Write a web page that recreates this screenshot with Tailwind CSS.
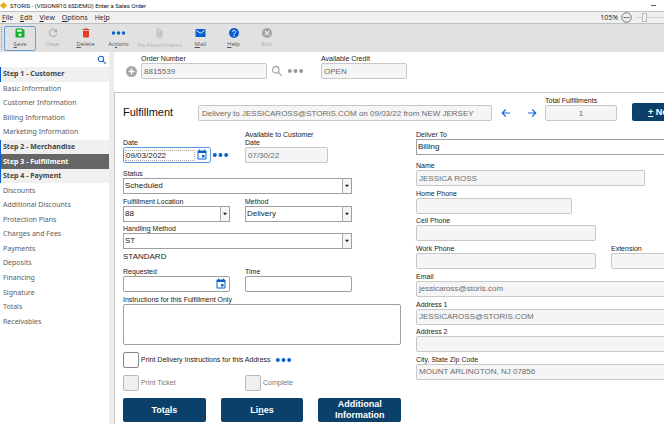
<!DOCTYPE html>
<html lang="en">

<head>
  <meta charset="UTF-8">
  <meta name="viewport" content="width=device-width, initial-scale=1.0">
  <title>Enter a Sales Order</title>
  <script src="https://cdn.jsdelivr.net/npm/@tailwindcss/browser@4"></script>
</head>

<body class="h-screen overflow-hidden flex flex-col bg-white font-['Liberation_Sans',Arial,sans-serif] text-[8px] leading-[8px] text-[#222]">

  <!-- Icons -->
  <svg class="hidden">
    <symbol id="calendar" viewBox="0 0 24 24">
      <path fill="currentColor" d="M17 12h-5v5h5v-5zM16 1v2H8V1H6v2H5a2 2 0 0 0-2 2v14a2 2 0 0 0 2 2h14a2 2 0 0 0 2-2V5a2 2 0 0 0-2-2h-1V1h-2zm3 18H5V8h14v11z" />
    </symbol>
    <symbol id="dots" viewBox="0 0 18 6">
      <g fill="currentColor"><circle cx="3" cy="3" r="2.1" /><circle cx="9" cy="3" r="2.1" /><circle cx="15" cy="3" r="2.1" /></g>
    </symbol>
    <symbol id="search" viewBox="0 0 24 24">
      <g fill="none" stroke="currentColor" stroke-width="2.6"><circle cx="9.5" cy="9.5" r="6.5" /><path d="M14.5 14.5l7 7" /></g>
    </symbol>
    <symbol id="caret" viewBox="0 0 6 4">
      <path fill="currentColor" d="M1 .8h4L3 3.2z" />
    </symbol>
  </svg>

  <!-- Title bar -->
  <header class="h-[11px] shrink-0 flex items-center pr-[8px] font-[Roboto,sans-serif] text-[6px] text-[#111]">
    <svg class="size-[7px] mr-[3px]" viewBox="0 0 14 14"><path fill="#f5a800" d="M7 0l3.300 3.300L7 6.600 3.700 3.300zM3.300 3.700L6.600 7l-3.300 3.300L0 7zM10.700 3.700L14 7l-3.300 3.300L7.400 7zM7 7.400l3.300 3.300L7 14l-3.300-3.300zM5.500 5.500h3v3h-3z" /></svg>
    <h1>STORIS - (VISIONR10.6SDEMO) Enter a Sales Order</h1>
    <button aria-label="Minimize" class="ml-auto w-[5px] h-px bg-[#555]"></button>
  </header>

  <!-- Menu bar -->
  <nav class="h-[13px] shrink-0 flex items-center border-y border-[#c0c0c0] bg-[#f0f0f0] pl-[2px] font-['Open_Sans',sans-serif] text-[7px]">
    <div class="flex gap-[7px]">
      <button><u>F</u>ile</button>
      <button><u>E</u>dit</button>
      <button><u>V</u>iew</button>
      <button><u>O</u>ptions</button>
      <button>He<u>l</u>p</button>
    </div>
    <label for="zoom" class="ml-auto">105%</label>
    <button aria-label="Zoom out" class="ml-[3px]">
      <svg class="size-[11px]" viewBox="0 0 22 22"><g fill="none" stroke="#777" stroke-width="2"><circle cx="11" cy="11" r="9.5" /><path d="M5 11h12" /></g></svg>
    </button>
    <input id="zoom" type="range" value="25" class="ml-[4px] w-[28px] h-[10px] appearance-none bg-transparent [&::-webkit-slider-runnable-track]:h-px [&::-webkit-slider-runnable-track]:bg-[#d0d0d0] [&::-webkit-slider-thumb]:appearance-none [&::-webkit-slider-thumb]:-mt-[4px] [&::-webkit-slider-thumb]:w-[5px] [&::-webkit-slider-thumb]:h-[9px] [&::-webkit-slider-thumb]:border [&::-webkit-slider-thumb]:border-[#bbb] [&::-webkit-slider-thumb]:bg-[#f4f4f4]">
  </nav>

  <!-- Toolbar -->
  <div class="h-[28px] shrink-0 flex items-center bg-[#e1e1e1] pl-[1px] font-['Open_Sans',sans-serif] text-[6px] text-[#555]">
    <span class="h-[23px] w-[2px] mr-px border-l border-dotted border-[#999]"></span>
    <button class="w-[32px] h-[25px] flex flex-col items-center justify-center gap-[2px] rounded-xs border border-[#6a9fd4]">
      <svg class="size-[10px]" viewBox="0 0 20 20"><path fill="#12b02c" d="M3 1h12l4 4v12a2 2 0 0 1-2 2H3a2 2 0 0 1-2-2V3a2 2 0 0 1 2-2z" /><path fill="#fff" d="M4 3.5h9.500v4H4z" /><circle cx="10" cy="13.500" r="3" fill="#fff" /></svg>
      <span><u>S</u>ave</span>
    </button>
    <button disabled class="w-[33px] flex flex-col items-center gap-[2px] text-[#a8a8a8]">
      <svg class="size-[10px]" viewBox="0 0 20 20"><path fill="none" stroke="#aaa" stroke-width="2.200" d="M16 5.500A7.300 7.300 0 1 0 17.300 11" /><path fill="#aaa" d="M18 1v7.500h-7.500z" /></svg>
      <span>Clear</span>
    </button>
    <button class="w-[33px] flex flex-col items-center gap-[2px]">
      <svg class="size-[10px]" viewBox="0 0 20 20"><path fill="#e23d24" d="M7.500 1h5l1 1H17v2.500H3V2h3.500zM4 6h12v11a2 2 0 0 1-2 2H6a2 2 0 0 1-2-2z" /></svg>
      <span><u>D</u>elete</span>
    </button>
    <button class="w-[33px] flex flex-col items-center gap-[2px]">
      <svg class="w-[15px] h-[10px] text-[#0a5fd0]"><use href="#dots" /></svg>
      <span>Ac<u>t</u>ions</span>
    </button>
    <button disabled class="w-[49px] flex flex-col items-center gap-[2px] text-[#b0b0b0] whitespace-nowrap">
      <svg class="w-[7px] h-[11px]" viewBox="0 0 14 22"><path fill="none" stroke="#b0b0b0" stroke-width="1.800" d="M12 6v9.500a5 5 0 0 1-10 0V5a3.300 3.300 0 0 1 6.600 0v9.500a1.600 1.600 0 0 1-3.200 0V6" /></svg>
      <span>No Attachments</span>
    </button>
    <button class="w-[33px] flex flex-col items-center gap-[2px]">
      <svg class="w-[11px] h-[10px]" viewBox="0 0 22 20"><rect x="1" y="2" width="20" height="16" rx="1.500" fill="#0a5fd0" /><path fill="none" stroke="#fff" stroke-width="1.800" d="M3 5l8 5.500L19 5" /></svg>
      <span><u>M</u>ail</span>
    </button>
    <button class="w-[33px] flex flex-col items-center gap-[2px]">
      <svg class="size-[10px]" viewBox="0 0 20 20"><circle cx="10" cy="10" r="10" fill="#0a5fd0" /><path fill="none" stroke="#fff" stroke-width="2" d="M6.800 7.800a3.200 3.200 0 1 1 5 2.600C10.500 11.300 10 11.800 10 13" /><circle cx="10" cy="15.800" r="1.200" fill="#fff" /></svg>
      <span><u>H</u>elp</span>
    </button>
    <button disabled class="w-[33px] flex flex-col items-center gap-[2px] text-[#a8a8a8]">
      <svg class="size-[10px]" viewBox="0 0 20 20"><circle cx="10" cy="10" r="10" fill="#a3a3a3" /><path stroke="#e8e8e8" stroke-width="2.400" d="M6 6l8 8M14 6l-8 8" /></svg>
      <span>Exit</span>
    </button>
  </div>

  <div class="flex-1 min-h-0 flex">

    <!-- Steps -->
    <aside class="w-[109px] shrink-0 font-['Noto_Sans',sans-serif] text-[7px] text-[#5c5c5c]">
      <div class="h-[15px] flex items-center justify-end pr-[2px]">
        <button aria-label="Search steps"><svg class="size-[10px] text-[#1467d2]"><use href="#search" /></svg></button>
      </div>
      <nav class="h-[262px] grid auto-rows-fr *:flex *:items-center *:pl-[2px] *:border-l *:border-transparent">
        <a href="#" class="border-[#0a5fd0]! bg-[#f0f0f0] font-bold text-[#444]">Step 1 - Customer</a>
        <a href="#">Basic Information</a>
        <a href="#">Customer Information</a>
        <a href="#">Billing Information</a>
        <a href="#">Marketing Information</a>
        <a href="#" class="border-[#0a5fd0]! bg-[#f0f0f0] font-bold text-[#444]">Step 2 - Merchandise</a>
        <a href="#" class="border-[#0a5fd0]! bg-[#666] font-bold text-white">Step 3 - Fulfillment</a>
        <a href="#" class="border-[#0a5fd0]! bg-[#f0f0f0] font-bold text-[#444]">Step 4 - Payment</a>
        <a href="#">Discounts</a>
        <a href="#">Additional Discounts</a>
        <a href="#">Protection Plans</a>
        <a href="#">Charges and Fees</a>
        <a href="#">Payments</a>
        <a href="#">Deposits</a>
        <a href="#">Financing</a>
        <a href="#">Signature</a>
        <a href="#">Totals</a>
        <a href="#">Receivables</a>
      </nav>
    </aside>
    <div class="w-[5px] shrink-0 bg-[#ececec]"></div>

    <main class="flex-1 min-w-0 flex flex-col overflow-hidden">

      <!-- Order -->
      <section class="h-[40px] shrink-0 flex items-end pb-[13px] pl-[12px]">
        <button aria-label="New order" class="mr-[4px] mb-[2px]">
          <svg class="size-[11px]" viewBox="0 0 22 22"><circle cx="11" cy="11" r="11" fill="#a6a6a6" /><path stroke="#fff" stroke-width="2.600" d="M11 5v12M5 11h12" /></svg>
        </button>
        <div class="flex flex-col">
          <label for="order" class="text-[7px]">Order Number</label>
          <input id="order" readonly value="8815539" class="w-[126px] h-4 px-[2px] rounded-xs border border-[#c8c8c8] bg-[#f5f5f5] text-[#666]">
        </div>
        <button aria-label="Find order" class="ml-[4px] mb-[2px]"><svg class="size-[12px] text-[#aaa]"><use href="#search" /></svg></button>
        <button aria-label="Order options" class="ml-[4px] mb-[5px]"><svg class="w-[17px] h-[6px] text-[#999]"><use href="#dots" /></svg></button>
        <div class="flex flex-col ml-[17px]">
          <label for="credit" class="text-[7px]">Available Credit</label>
          <input id="credit" readonly value="OPEN" class="w-[86px] h-4 px-[2px] rounded-xs border border-[#c8c8c8] bg-[#f5f5f5] text-[#666]">
        </div>
      </section>

      <section class="flex-1 min-h-0 border-t border-l border-[#c8c8c8] pl-[8px]">

        <!-- Fulfillment heading -->
        <div class="h-[28px] flex items-end *:shrink-0">
          <h2 class="w-[75px] pb-[3px] text-[11px] leading-[11px] text-[#111]">Fulfillment</h2>
          <input readonly aria-label="Fulfillment" value="Delivery to JESSICAROSS@STORIS.COM on 09/03/22 from NEW JERSEY" class="w-[294px] h-4 px-[3px] rounded-xs border border-[#c8c8c8] bg-[#f5f5f5] text-[#6c6c6c]">
          <div class="flex gap-[16px] ml-[9px] mb-[3px] text-[#1467d2]">
            <button aria-label="Previous"><svg class="size-[10px]" viewBox="0 0 20 20"><path fill="none" stroke="currentColor" stroke-width="2.200" d="M18 10H3M9.500 3l-7 7 7 7" /></svg></button>
            <button aria-label="Next"><svg class="size-[10px]" viewBox="0 0 20 20"><path fill="none" stroke="currentColor" stroke-width="2.200" d="M2 10h15M10.500 3l7 7-7 7" /></svg></button>
          </div>
          <div class="flex flex-col ml-[8px]">
            <label for="total" class="text-[7px] whitespace-nowrap">Total Fulfillments</label>
            <input id="total" readonly value="1" class="w-[72px] h-4 rounded-xs border border-[#c8c8c8] bg-[#f5f5f5] text-center text-[#6c6c6c]">
          </div>
          <button class="ml-[15px] w-[80px] h-[18px] rounded-xs bg-[#0b406b] pl-[16px] text-left text-[9px] font-bold text-white"><u>+</u> New</button>
        </div>

        <div class="flex">
          <!-- Left column -->
          <form class="w-[278px] shrink-0 mt-[10px]">
            <div class="grid grid-cols-[122px_107px] items-end">
              <div class="flex flex-col">
                <label for="date" class="text-[7px]">Date</label>
                <div class="flex items-center">
                  <div class="w-[88px] h-4 flex items-center rounded-xs border border-[#5b9bdf] pl-px pr-[2px]">
                    <input id="date" value="09/03/2022" class="min-w-0 flex-1 h-[11px] border border-dotted border-[#aaa]">
                    <button type="button" aria-label="Pick date"><svg class="size-[12px] ml-[1px] text-[#0a5fd0]"><use href="#calendar" /></svg></button>
                  </div>
                  <button type="button" aria-label="Date options" class="ml-[1px]"><svg class="w-[17px] h-[6px] text-[#0a5fd0]"><use href="#dots" /></svg></button>
                </div>
              </div>
              <div class="flex flex-col">
                <label for="available" class="w-[80px] text-[7px]">Available to Customer Date</label>
                <input id="available" readonly value="07/30/22" class="w-[83px] h-4 px-[2px] rounded-xs border border-[#c8c8c8] bg-[#f5f5f5] text-[#6c6c6c]">
              </div>
            </div>

            <div class="flex flex-col mt-[7px] w-[229px]">
              <label for="status" class="text-[7px]">Status</label>
              <div class="relative flex">
                <select id="status" class="w-full h-4 appearance-none border border-[#a0a0a0] pl-[1px]"><option>Scheduled</option></select>
                <span class="absolute inset-y-px right-px w-[9px] flex items-center justify-center border-l border-[#aaa] bg-[#f5f5f5] pointer-events-none"><svg class="w-[6px] h-[4px]"><use href="#caret" /></svg></span>
              </div>
            </div>

            <div class="grid grid-cols-[107px_107px] gap-[15px] mt-[4px]">
              <div class="flex flex-col">
                <label for="location" class="text-[7px]">Fulfillment Location</label>
                <div class="relative flex">
                  <select id="location" class="w-full h-4 appearance-none border border-[#a0a0a0] pl-[1px]"><option>88</option></select>
                  <span class="absolute inset-y-px right-px w-[9px] flex items-center justify-center border-l border-[#aaa] bg-[#f5f5f5] pointer-events-none"><svg class="w-[6px] h-[4px]"><use href="#caret" /></svg></span>
                </div>
              </div>
              <div class="flex flex-col">
                <label for="method" class="text-[7px]">Method</label>
                <div class="relative flex">
                  <select id="method" class="w-full h-4 appearance-none border border-[#a0a0a0] pl-[1px]"><option>Delivery</option></select>
                  <span class="absolute inset-y-px right-px w-[9px] flex items-center justify-center border-l border-[#aaa] bg-[#f5f5f5] pointer-events-none"><svg class="w-[6px] h-[4px]"><use href="#caret" /></svg></span>
                </div>
              </div>
            </div>

            <div class="flex flex-col mt-[3px] w-[229px]">
              <label for="handling" class="text-[7px]">Handling Method</label>
              <div class="relative flex">
                <select id="handling" class="w-full h-4 appearance-none border border-[#a0a0a0] pl-[1px]"><option>ST</option></select>
                <span class="absolute inset-y-px right-px w-[9px] flex items-center justify-center border-l border-[#aaa] bg-[#f5f5f5] pointer-events-none"><svg class="w-[6px] h-[4px]"><use href="#caret" /></svg></span>
              </div>
              <p class="mt-[4px]">STANDARD</p>
            </div>

            <div class="grid grid-cols-[107px_107px] gap-[15px] mt-[7px]">
              <div class="flex flex-col">
                <label for="requested" class="text-[7px]">Requested</label>
                <div class="h-4 flex items-center rounded-xs border border-[#a0a0a0] pr-[2px]">
                  <input id="requested" class="min-w-0 flex-1 px-[2px]">
                  <button type="button" aria-label="Pick requested date"><svg class="size-[12px] text-[#0a5fd0]"><use href="#calendar" /></svg></button>
                </div>
              </div>
              <div class="flex flex-col">
                <label for="time" class="text-[7px]">Time</label>
                <input id="time" class="h-4 px-[2px] rounded-xs border border-[#a0a0a0]">
              </div>
            </div>

            <div class="flex flex-col mt-[4px]">
              <label for="instructions" class="text-[7px]">Instructions for this Fulfillment Only</label>
              <textarea id="instructions" class="h-[41px] resize-none rounded-xs border border-[#a0a0a0] p-[2px]"></textarea>
            </div>

            <div class="flex items-center gap-[2px] mt-[7px] text-[7px]">
              <input id="print" type="checkbox" class="size-4 appearance-none rounded-xs border border-[#888]">
              <label for="print">Print Delivery Instructions for this Address</label>
              <button type="button" aria-label="Print options" class="ml-[2px]"><svg class="w-[17px] h-[6px] text-[#0a5fd0]"><use href="#dots" /></svg></button>
            </div>
            <div class="grid grid-cols-2 w-[244px] mt-[7px] text-[7px] text-[#777]">
              <div class="flex items-center gap-[2px]">
                <input id="ticket" type="checkbox" disabled class="size-4 appearance-none rounded-xs border border-[#b8b8b8] bg-[#f0f0f0]">
                <label for="ticket">Print Ticket</label>
              </div>
              <div class="flex items-center gap-[2px]">
                <input id="complete" type="checkbox" disabled class="size-4 appearance-none rounded-xs border border-[#b8b8b8] bg-[#f0f0f0]">
                <label for="complete">Complete</label>
              </div>
            </div>

            <div class="grid grid-cols-3 gap-[15px] mt-[7px] text-[9px] leading-[11px] font-bold text-white">
              <button type="button" class="h-[24px] rounded-xs bg-[#0b406b]">Tot<u>a</u>ls</button>
              <button type="button" class="h-[24px] rounded-xs bg-[#0b406b]">Li<u>n</u>es</button>
              <button type="button" class="h-[24px] rounded-xs bg-[#0b406b]">Additional Information</button>
            </div>
          </form>

          <!-- Right column -->
          <form class="w-[270px] shrink-0 ml-[15px] mt-[10px]">
            <div class="flex flex-col">
              <label for="deliver" class="text-[7px]">Deliver To</label>
              <select id="deliver" class="h-4 appearance-none border border-[#a0a0a0] pl-[1px]"><option>Billing</option></select>
            </div>
            <div class="h-[218px] mt-[7px] flex flex-col justify-between">
              <div class="flex flex-col">
                <label for="name" class="text-[7px]">Name</label>
                <input id="name" readonly value="JESSICA ROSS" class="w-[229px] h-4 px-[2px] rounded-xs border border-[#c8c8c8] bg-[#f5f5f5] text-[#6c6c6c]">
              </div>
              <div class="flex flex-col">
                <label for="home" class="text-[7px]">Home Phone</label>
                <input id="home" readonly class="w-[156px] h-4 px-[2px] rounded-xs border border-[#c8c8c8] bg-[#f5f5f5] text-[#6c6c6c]">
              </div>
              <div class="flex flex-col">
                <label for="cell" class="text-[7px]">Cell Phone</label>
                <input id="cell" readonly class="w-[180px] h-4 px-[2px] rounded-xs border border-[#c8c8c8] bg-[#f5f5f5] text-[#6c6c6c]">
              </div>
              <div class="flex gap-[15px]">
                <div class="flex flex-col">
                  <label for="work" class="text-[7px]">Work Phone</label>
                  <input id="work" readonly class="w-[180px] h-4 px-[2px] rounded-xs border border-[#c8c8c8] bg-[#f5f5f5] text-[#6c6c6c]">
                </div>
                <div class="flex flex-col">
                  <label for="ext" class="text-[7px]">Extension</label>
                  <input id="ext" readonly class="w-[75px] h-4 px-[2px] rounded-xs border border-[#c8c8c8] bg-[#f5f5f5] text-[#6c6c6c]">
                </div>
              </div>
              <div class="flex flex-col">
                <label for="email" class="text-[7px]">Email</label>
                <input id="email" readonly value="jessicaross@storis.com" class="h-4 px-[2px] rounded-xs border border-[#c8c8c8] bg-[#f5f5f5] text-[#6c6c6c]">
              </div>
              <div class="flex flex-col">
                <label for="address1" class="text-[7px]">Address 1</label>
                <input id="address1" readonly value="JESSICAROSS@STORIS.COM" class="h-4 px-[2px] rounded-xs border border-[#c8c8c8] bg-[#f5f5f5] text-[#6c6c6c]">
              </div>
              <div class="flex flex-col">
                <label for="address2" class="text-[7px]">Address 2</label>
                <input id="address2" readonly class="h-4 px-[2px] rounded-xs border border-[#c8c8c8] bg-[#f5f5f5] text-[#6c6c6c]">
              </div>
              <div class="flex flex-col">
                <label for="city" class="text-[7px]">City, State Zip Code</label>
                <input id="city" readonly value="MOUNT ARLINGTON, NJ 07856" class="h-4 px-[2px] rounded-xs border border-[#c8c8c8] bg-[#f5f5f5] text-[#6c6c6c]">
              </div>
            </div>
          </form>
        </div>
      </section>
    </main>
  </div>
</body>

</html>
